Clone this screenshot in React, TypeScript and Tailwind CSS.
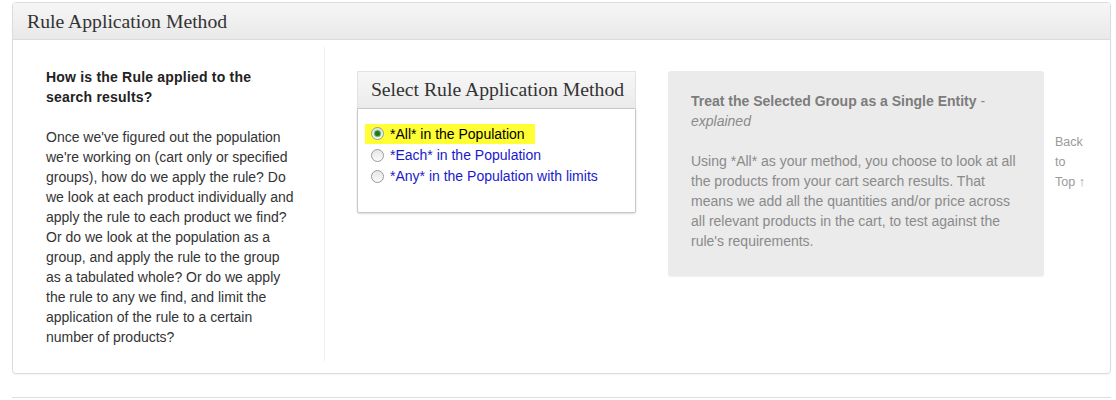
import React from "react";

const serif = { fontFamily: '"Liberation Serif", Georgia, serif' };

function Radio({ checked }: { checked?: boolean }) {
  return (
    <span className="relative inline-flex h-[13px] w-[13px] shrink-0 items-center justify-center rounded-full border border-[#9a9a9a] bg-gradient-to-b from-[#e6e6e6] to-[#fbfbfb]">
      {checked && (
        <span className="h-[5px] w-[5px] rounded-full bg-[#1f7a1f] shadow-[0_0_1px_1px_#4caf50]" />
      )}
    </span>
  );
}

const leftLines = [
  "Once we've figured out the population",
  "we're working on (cart only or specified",
  "groups), how do we apply the rule? Do",
  "we look at each product individually and",
  "apply the rule to each product we find?",
  "Or do we look at the population as a",
  "group, and apply the rule to the group",
  "as a tabulated whole? Or do we apply",
  "the rule to any we find, and limit the",
  "application of the rule to a certain",
  "number of products?",
];

export default function App() {
  return (
    <div className="w-[1116px] h-[400px] bg-white text-[14px] leading-[20px] text-[#333]" style={{ fontFamily: '"Liberation Sans", Arial, sans-serif' }}>
      <div className="pt-[2px] pl-[12px]">
        <div className="w-[1099px] rounded-[4px] border border-[#dcdcdc] bg-white shadow-[0_1px_1px_rgba(0,0,0,0.05)]">
          <div className="flex h-[37px] items-center rounded-t-[3px] border-b border-[#dcdcdc] bg-gradient-to-b from-[#f6f6f6] to-[#e9e9e9] pl-[14px] text-[19.7px] text-[#333]" style={serif}>
            Rule Application Method
          </div>
          <div className="flex pt-[7px] pb-[12px]">
            <div className="w-[312px] shrink-0 border-r border-[#eeeeee] pl-[33px] pr-[20px] pt-[20px] pb-[14px]">
              <p className="mb-[20px] whitespace-nowrap font-bold text-[#222] tracking-[0.2px]">
                How is the Rule applied to the
                <br />
                search results?
              </p>
              <p className="whitespace-nowrap">
                {leftLines.map((l, i) => (
                  <span key={i} className="block">
                    {l}
                  </span>
                ))}
              </p>
            </div>
            <div className="ml-[32px] mt-[24px] w-[279px] shrink-0 self-start">
              <div className="flex h-[37px] items-center justify-center border border-[#e2e2e2] border-b-0 bg-gradient-to-b from-[#f7f7f7] to-[#ebebeb] pb-[2px] pl-[2px] text-[19.7px] text-[#333]" style={serif}>
                Select Rule Application Method
              </div>
              <div className="h-[105px] rounded-b-[2px] border border-[#c8c8c8] bg-white pt-[12px] shadow-[0_1px_2px_rgba(0,0,0,0.15)]">
                <div className="ml-[7px] inline-flex h-[20px] items-center bg-[#ffff33] pl-[6px] pr-[10px] text-black">
                  <Radio checked />
                  <span className="ml-[6px]">*All* in the Population</span>
                </div>
                <div className="ml-[13px] mt-[1px] flex h-[21px] items-center text-[#1a1acc]">
                  <Radio />
                  <span className="ml-[6px]">*Each* in the Population</span>
                </div>
                <div className="ml-[13px] flex h-[21px] items-center text-[#1a1acc]">
                  <Radio />
                  <span className="ml-[6px]">*Any* in the Population with limits</span>
                </div>
              </div>
            </div>
            <div className="ml-[32px] mt-[24px] w-[376px] shrink-0 self-start rounded-[3px] bg-[#ebebeb] pt-[20px] pl-[23px] pr-[20px] pb-[25px] text-[#8a8a8a] shadow-[0_1px_1px_rgba(0,0,0,0.06)]">
              <p className="mb-[20px]">
                <span className="font-bold text-[#7c7c7c]">Treat the Selected Group as a Single Entity</span> - <em>explained</em>
              </p>
              <p>
                Using *All* as your method, you choose to look at all the products from your cart search results. That means we add all the quantities and/or price across all relevant products in the cart, to test against the rule's requirements.
              </p>
            </div>
            <div className="ml-[11px] mt-[85px] w-[32px] shrink-0 self-start text-[12.5px] leading-[20px] text-[#999]">
              Back to Top ↑
            </div>
          </div>
        </div>
        <div className="mt-[23px] w-[1099px] border-t border-[#dddddd]" />
      </div>
    </div>
  );
}
